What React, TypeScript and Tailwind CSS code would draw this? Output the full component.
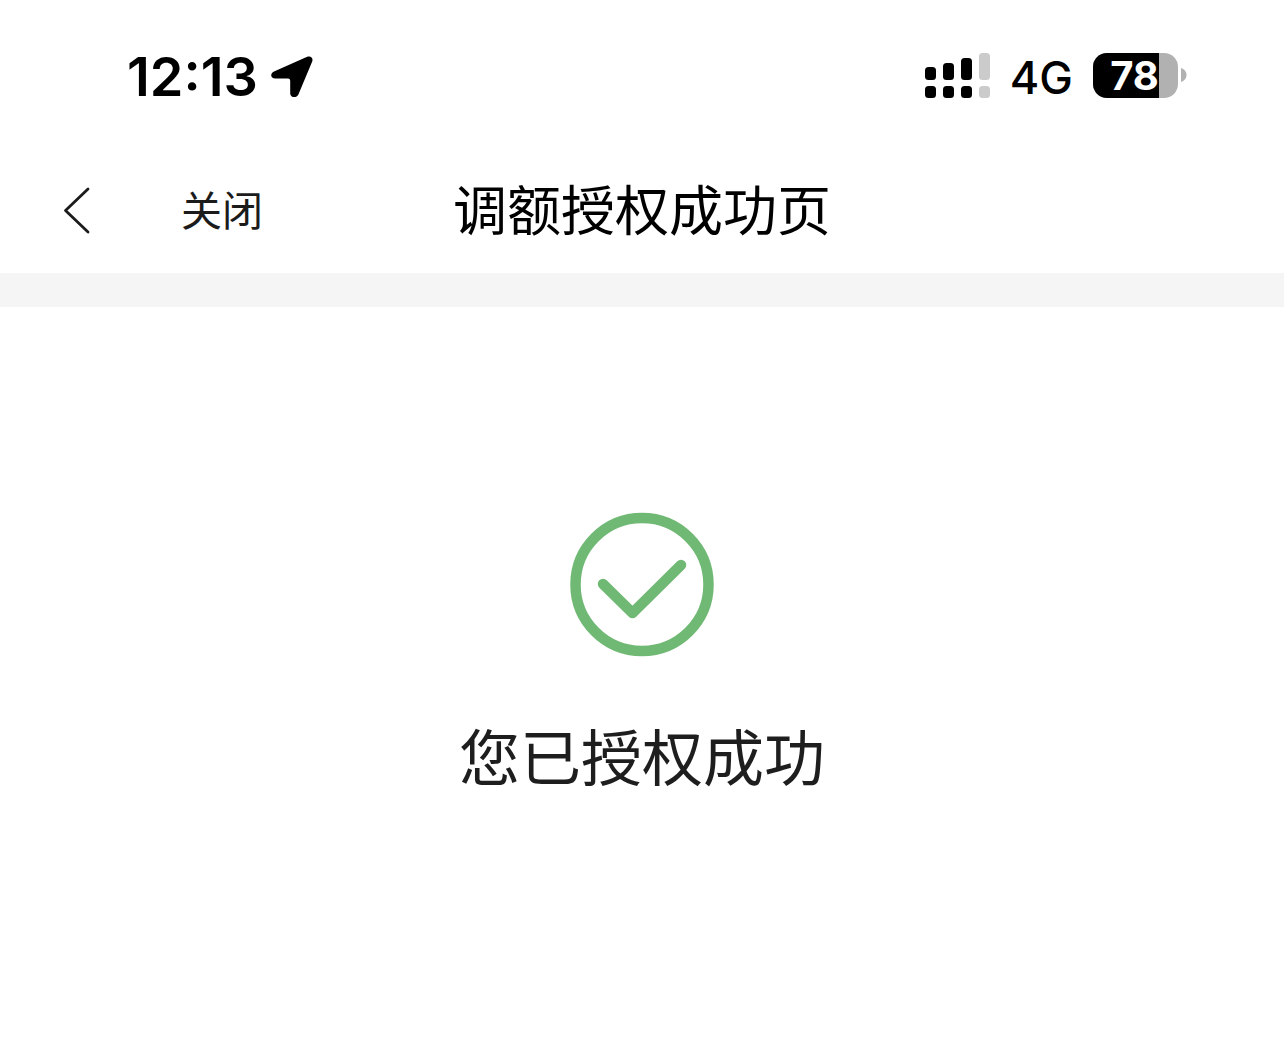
function LocationArrow() {
  return (
    <svg className="h-11 w-11" viewBox="0 0 44 44" aria-hidden="true">
      <path
        d="M4 16.5 37.2 1.8C40.6.4 43.5 3 42.2 6.4L28.4 39.5C26.9 43.2 20.3 43 20.2 38.4V25.8Q20.2 23.5 18 23.5H5.3C.4 23.5-.2 18.4 4 16.5Z"
        fill="#000"
      />
    </svg>
  );
}

function SignalBars() {
  return (
    <svg className="h-[45px] w-[65px]" viewBox="0 0 65 45" role="img" aria-label="信号">
      <rect x="0" y="14" width="11" height="13" rx="3.5" />
      <rect x="18" y="10" width="11" height="17" rx="3.5" />
      <rect x="36" y="5" width="11" height="22" rx="3.5" />
      <rect x="54" y="0" width="11" height="27" rx="3.5" fill="#cbcbcb" />
      <rect x="0" y="33" width="11" height="12" rx="3.5" />
      <rect x="18" y="33" width="11" height="12" rx="3.5" />
      <rect x="36" y="33" width="11" height="12" rx="3.5" />
      <rect x="54" y="33" width="11" height="12" rx="3.5" fill="#cbcbcb" />
    </svg>
  );
}

function Battery({ level }: { level: number }) {
  return (
    <div className="flex items-center gap-[3px]">
      <div className="relative flex h-[45px] w-[85px] items-center justify-center rounded-[14px] bg-[#b1b1b1]">
        <div className="absolute inset-y-0 left-0 rounded-l-[14px] bg-black" style={{ width: `${level}%` }} />
        <span className="relative pr-0.5 text-[40px] leading-[45px] font-bold text-white">{level}</span>
      </div>
      <svg className="h-[14px] w-[6px]" viewBox="0 0 6 14" aria-hidden="true">
        <path d="M0 0C3 .8 5.500 3.500 5.500 7S3 13.200 0 14Z" fill="#b1b1b1" />
      </svg>
    </div>
  );
}

function StatusBar() {
  return (
    <div className="flex h-[150px] items-center justify-between pr-[97px] pl-[127px] font-['Inter',sans-serif] text-black">
      <div className="flex items-center gap-3 pt-1">
        <span className="text-[54px] leading-[60px] font-semibold">12:13</span>
        <LocationArrow />
      </div>
      <div className="flex items-center gap-5">
        <SignalBars />
        <span className="pt-1 text-[45px] leading-[45px] font-medium">4G</span>
        <Battery level={78} />
      </div>
    </div>
  );
}

function NavBar() {
  return (
    <header className="grid h-[123px] grid-cols-[1fr_auto_1fr] items-center pb-1">
      <div className="flex items-center gap-[90px] pl-[63px] text-[#1b1b1b]">
        <button type="button" aria-label="返回">
          <svg className="h-12 w-7" viewBox="0 0 28 48" fill="none" aria-hidden="true">
            <path d="M25 3 2.500 24.500 25 46" stroke="currentColor" strokeWidth="2.800" strokeLinecap="round" strokeLinejoin="round" />
          </svg>
        </button>
        <button type="button" className="pb-1 text-[41px] leading-[60px]">关闭</button>
      </div>
      <h1 className="pb-1 text-[54px] leading-[80px] text-black">调额授权成功页</h1>
    </header>
  );
}

export default function App() {
  return (
    <div className="min-h-screen bg-white font-['Noto_Sans_CJK_SC',sans-serif]">
      <StatusBar />
      <NavBar />
      <div className="h-[34px] bg-[#f5f5f5]" />
      <main className="flex flex-col items-center gap-[52px] pt-[205px]">
        <svg className="h-[146px] w-[146px]" viewBox="0 0 146 146" fill="none" stroke="#70b974" aria-hidden="true">
          <circle cx="73" cy="72.500" r="66.500" strokeWidth="10.500" />
          <path d="M34 72 63.500 101 112 53" strokeWidth="10.500" strokeLinecap="round" strokeLinejoin="round" />
        </svg>
        <p className="text-[61px] leading-[90px] text-[#1e1e1e]">您已授权成功</p>
      </main>
    </div>
  );
}
